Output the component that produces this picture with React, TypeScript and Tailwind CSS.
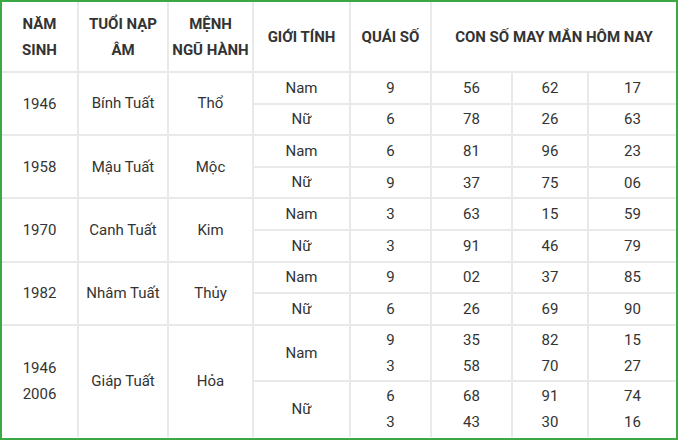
import React from 'react';

type Group = {
  year: string[];
  tuoi: string;
  menh: string;
  nam: { q: string[]; n: string[][] };
  nu: { q: string[]; n: string[][] };
};

const groups: Group[] = [
  { year: ['1946'], tuoi: 'Bính Tuất', menh: 'Thổ', nam: { q: ['9'], n: [['56', '62', '17']] }, nu: { q: ['6'], n: [['78', '26', '63']] } },
  { year: ['1958'], tuoi: 'Mậu Tuất', menh: 'Mộc', nam: { q: ['6'], n: [['81', '96', '23']] }, nu: { q: ['9'], n: [['37', '75', '06']] } },
  { year: ['1970'], tuoi: 'Canh Tuất', menh: 'Kim', nam: { q: ['3'], n: [['63', '15', '59']] }, nu: { q: ['3'], n: [['91', '46', '79']] } },
  { year: ['1982'], tuoi: 'Nhâm Tuất', menh: 'Thủy', nam: { q: ['9'], n: [['02', '37', '85']] }, nu: { q: ['6'], n: [['26', '69', '90']] } },
  {
    year: ['1946', '2006'],
    tuoi: 'Giáp Tuất',
    menh: 'Hỏa',
    nam: { q: ['9', '3'], n: [['35', '82', '15'], ['58', '70', '27']] },
    nu: { q: ['6', '3'], n: [['68', '91', '74'], ['43', '30', '16']] },
  },
];

const td = 'border-2 border-[#e9e9e9] text-center align-middle p-0';

const Stack = ({ items }: { items: string[] }) => (
  <div className="flex flex-col leading-[26px]">
    {items.map((t, i) => (
      <span key={i}>{t}</span>
    ))}
  </div>
);

const GenderRow = ({
  g,
  label,
  data,
  first,
}: {
  g: Group;
  label: string;
  data: { q: string[]; n: string[][] };
  first: boolean;
}) => {
  const tall = g.year.length > 1;
  return (
    <tr className={tall ? 'h-[56px]' : 'h-[31.6px]'}>
      {first && (
        <>
          <td rowSpan={2} className={td}>
            <Stack items={g.year} />
          </td>
          <td rowSpan={2} className={td}>{g.tuoi}</td>
          <td rowSpan={2} className={td}>{g.menh}</td>
        </>
      )}
      <td className={td}>{label}</td>
      <td className={td}>
        <Stack items={data.q} />
      </td>
      {[0, 1, 2].map((c) => (
        <td key={c} className={td}>
          <Stack items={data.n.map((r) => r[c])} />
        </td>
      ))}
    </tr>
  );
};

export default function App() {
  return (
    <div className="w-[680px] h-[442px] bg-white">
      <div className="w-[678px] h-[440px] border-2 border-[#3aa845] bg-white">
        <table
          className="w-full table-fixed border-collapse border-hidden text-[15px] text-[#333]"
          style={{ fontFamily: 'Roboto, "Noto Sans", sans-serif' }}
        >
          <colgroup>
            <col className="w-[76px]" />
            <col className="w-[90px]" />
            <col className="w-[85px]" />
            <col className="w-[97px]" />
            <col className="w-[81px]" />
            <col className="w-[81px]" />
            <col className="w-[76px]" />
            <col className="w-[88px]" />
          </colgroup>
          <thead>
            <tr className="h-[70px] font-bold leading-[26px]">
              <th className={td}>
                NĂM
                <br />
                SINH
              </th>
              <th className={td}>
                TUỔI NẠP
                <br />
                ÂM
              </th>
              <th className={td}>
                MỆNH
                <br />
                NGŨ HÀNH
              </th>
              <th className={td}>GIỚI TÍNH</th>
              <th className={td}>QUÁI SỐ</th>
              <th colSpan={3} className={td}>
                CON SỐ MAY MẮN HÔM NAY
              </th>
            </tr>
          </thead>
          <tbody>
            {groups.map((g, i) => (
              <React.Fragment key={i}>
                <GenderRow g={g} label="Nam" data={g.nam} first />
                <GenderRow g={g} label="Nữ" data={g.nu} first={false} />
              </React.Fragment>
            ))}
          </tbody>
        </table>
      </div>
    </div>
  );
}
